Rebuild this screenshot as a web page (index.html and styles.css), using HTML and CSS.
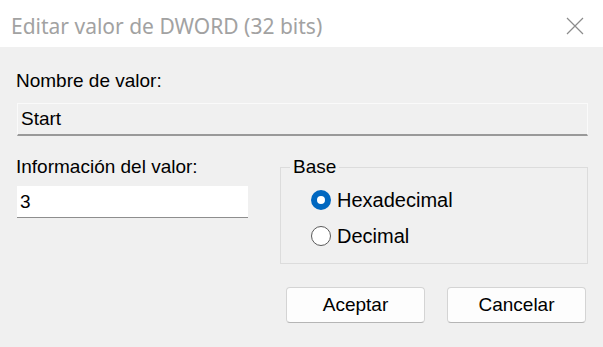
FILE: index.html
```html
<!DOCTYPE html>
<html lang="es">
<head>
  <meta charset="UTF-8">
  <title>Editar valor de DWORD (32 bits)</title>
  <link rel="stylesheet" href="styles.css">
</head>
<body>
  <div class="titlebar">
    <span class="title">Editar valor de DWORD (32 bits)</span>
    <svg class="close" width="18" height="18" viewBox="0 0 18 18">
      <path d="M1 1 L17 17 M17 1 L1 17" stroke="#8c8c8c" stroke-width="1.2" fill="none"/>
    </svg>
  </div>
  <div class="content">
    <div class="label first">Nombre de valor:</div>
    <div class="name-field">Start</div>

    <div class="row">
      <div class="left">
        <div class="label">Información del valor:</div>
        <div class="value-input">3</div>
      </div>
      <fieldset class="base">
        <legend>Base</legend>
        <div class="option">
          <span class="radio checked"></span>
          <span>Hexadecimal</span>
        </div>
        <div class="option">
          <span class="radio"></span>
          <span>Decimal</span>
        </div>
      </fieldset>
    </div>

    <div class="buttons">
      <button class="btn">Aceptar</button>
      <button class="btn">Cancelar</button>
    </div>
  </div>
</body>
</html>
```

FILE: styles.css
```css
html, body {
  margin: 0;
  padding: 0;
}
body {
  width: 603px;
  height: 347px;
  overflow: hidden;
  background-color: #f0f0f0;
  font-family: 'Liberation Sans', Arial, sans-serif;
  font-size: 19px;
  color: #000;
}
.titlebar {
  height: 47px;
  background-color: #fff;
  display: flex;
  align-items: center;
  justify-content: space-between;
  padding: 0 19px 0 11px;
}
.title {
  font-family: 'Noto Sans', sans-serif;
  font-size: 21px;
  color: #a2a2a2;
  margin-top: 5px;
}
.close {
  margin-top: 4px;
}
.content {
  padding: 0 15px 0 16px;
}
.label {
  line-height: 22px;
}
.label.first {
  margin-top: 23px;
}
.name-field {
  margin: 11px 0 0 1px;
  height: 30px;
  line-height: 30px;
  padding-left: 3px;
  background-color: #f0f0f0;
  border: 1px solid #fafafa;
  border-bottom: 2px solid #999;
}
.row {
  display: flex;
  align-items: flex-start;
  margin-top: 20px;
}
.left {
  width: 233px;
  flex-shrink: 0;
}
.value-input {
  margin: 8px 0 0 1px;
  width: 228px;
  height: 31px;
  line-height: 31px;
  padding-left: 3px;
  background-color: #fff;
  border-bottom: 1px solid #8e8e8e;
}
.base {
  margin: 0 0 0 31px;
  padding: 4px 0 0 9px;
  width: 298px;
  height: 102px;
  border: 1px solid #dcdcdc;
  min-width: 0;
}
.base legend {
  padding: 0 3px;
  line-height: 22px;
}
.option {
  display: flex;
  align-items: center;
  height: 36px;
  padding-left: 21px;
  font-size: 20px;
}
.radio {
  width: 18px;
  height: 18px;
  border: 1px solid #5a5a5a;
  border-radius: 50%;
  margin-right: 6px;
  box-sizing: content-box;
  background-color: #fff;
}
.radio.checked {
  width: 8px;
  height: 8px;
  border: 6px solid #0067c0;
  background-color: #fff;
}
.buttons {
  display: flex;
  justify-content: flex-end;
  gap: 22px;
  margin-top: 23px;
  padding-right: 2px;
}
.btn {
  width: 139px;
  height: 36px;
  font-family: 'Liberation Sans', Arial, sans-serif;
  font-size: 19px;
  color: #000;
  background-color: #fdfdfd;
  border: 1px solid #d4d4d4;
  border-bottom-color: #b5b5b5;
  border-radius: 4px;
  padding: 0;
}
```
